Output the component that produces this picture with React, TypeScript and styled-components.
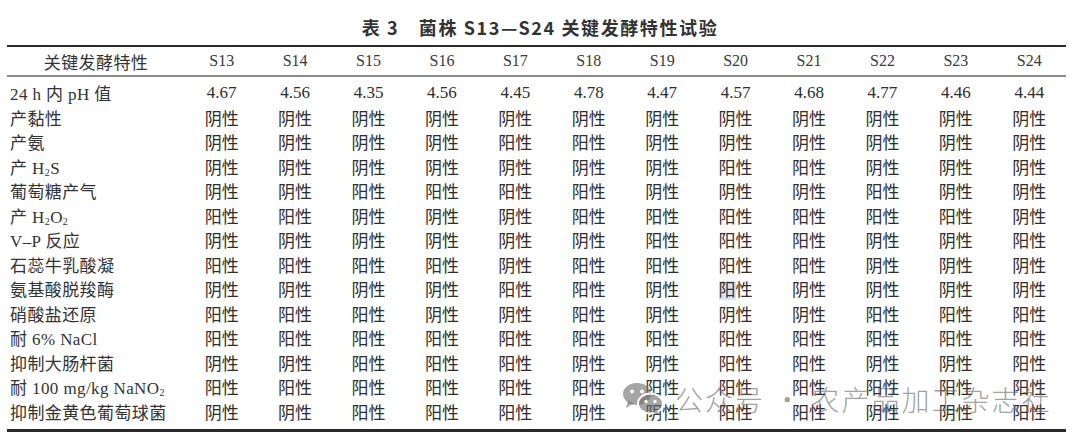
import React from "react";
import styled, { createGlobalStyle } from "styled-components";

const GlobalStyle = createGlobalStyle`
  html, body { margin: 0; padding: 0; background: #ffffff; }
  #root { width: 1080px; }
`;

const Page = styled.div`
  position: relative;
  width: 1080px;
  height: 442px;
  background: #fff;
  color: #2e2e2e;
  font-family: "Liberation Serif", "Noto Sans CJK SC", serif;
`;

const Title = styled.div`
  height: 45px;
  box-sizing: border-box;
  padding-top: 8px;
  display: flex;
  align-items: center;
  justify-content: center;
  font-family: "Noto Sans CJK SC", "Liberation Sans", sans-serif;
  font-weight: 700;
  font-size: 18px;
  letter-spacing: 1.6px;
  color: #333;
  white-space: pre;
`;

const Table = styled.div`
  width: 1059px;
  margin-left: 7px;
  border-top: 2px solid #2a2a2a;
  border-bottom: 3px solid #2a2a2a;
`;

const Row = styled.div<{ $head?: boolean }>`
  display: grid;
  grid-template-columns: 178px repeat(12, 1fr);
  align-items: center;
  height: ${(p) => (p.$head ? "28px" : "24.5px")};
  ${(p) => (p.$head ? "border-bottom: 2px solid #8c8c8c;" : "")}
`;

const Body = styled.div`
  padding-top: 3px;
  padding-bottom: 6px;
`;

const Label = styled.div<{ $center?: boolean }>`
  font-size: 17px;
  letter-spacing: 0.4px;
  padding-left: ${(p) => (p.$center ? "0" : "3px")};
  text-align: ${(p) => (p.$center ? "center" : "left")};
  white-space: nowrap;
  color: #333;
`;

const Cell = styled.div<{ $head?: boolean }>`
  text-align: center;
  font-size: ${(p) => (p.$head ? "16px" : "17px")};
  white-space: nowrap;
  color: ${(p) => (p.$head ? "#3a3a3a" : "#2e2e2e")};
`;

const Mark = styled.span`
  background: #d5e3f6;
`;

const Sub = styled.sub`
  font-size: 10px;
  vertical-align: -2px;
  line-height: 0;
`;

const Watermark = styled.div`
  position: absolute;
  left: 622px;
  top: 381px;
  display: flex;
  align-items: center;
  gap: 9px;
  pointer-events: none;
`;

const WatermarkText = styled.span`
  font-family: "Noto Sans CJK SC", sans-serif;
  font-weight: 300;
  font-size: 28px;
  letter-spacing: 2px;
  color: rgba(100, 100, 100, 0.62);
  white-space: pre;
  line-height: 36px;
`;

const strains = ["S13", "S14", "S15", "S16", "S17", "S18", "S19", "S20", "S21", "S22", "S23", "S24"];

type RowData = { label: React.ReactNode; values?: string[]; code?: string; mark?: number };

const rows: RowData[] = [
  { label: "24 h 内 pH 值", values: ["4.67", "4.56", "4.35", "4.56", "4.45", "4.78", "4.47", "4.57", "4.68", "4.77", "4.46", "4.44"] },
  { label: "产黏性", code: "NNNNNNNNNNNN" },
  { label: "产氨", code: "NNNNYYNNNNNN" },
  { label: <>产 H<Sub>2</Sub>S</>, code: "NNNNNNNYYNNN" },
  { label: "葡萄糖产气", code: "NNYYYYNNNYNN" },
  { label: <>产 H<Sub>2</Sub>O<Sub>2</Sub></>, code: "YYNNNYYYYYYN" },
  { label: "V–P 反应", code: "NNNNNNYYYNNY" },
  { label: "石蕊牛乳酸凝", code: "YYYYNYYYYNNN" },
  { label: "氨基酸脱羧酶", code: "NNNNYYNYNNNN", mark: 7 },
  { label: "硝酸盐还原", code: "YYYNNYNNNYYY" },
  { label: "耐 6% NaCl", code: "YYYYYYYYYYYY" },
  { label: "抑制大肠杆菌", code: "NNYYYNNYYNNY" },
  { label: <>耐 100 mg/kg NaNO<Sub>2</Sub></>, code: "YYYYYYYYYYYY" },
  { label: "抑制金黄色葡萄球菌", code: "NNYYYNNYYNNY" },
];

function WeChatLogo() {
  return (
    <svg width="44" height="34" viewBox="0 0 44 34" aria-hidden="true">
      <g fill="rgba(110,110,110,0.62)">
        <ellipse cx="15" cy="12" rx="14" ry="11" />
        <path d="M6 19 L4 26 L12 21 Z" />
      </g>
      <circle cx="10" cy="9.5" r="1.9" fill="#fff" />
      <circle cx="20" cy="9.5" r="1.9" fill="#fff" />
      <ellipse cx="28.5" cy="21.5" rx="12.5" ry="10" fill="rgba(110,110,110,0.62)" stroke="#fff" strokeWidth="2" />
      <path d="M35 29 L39 33.5 L31 30.5 Z" fill="rgba(110,110,110,0.62)" />
      <circle cx="24" cy="19.5" r="1.7" fill="#fff" />
      <circle cx="33" cy="19.5" r="1.7" fill="#fff" />
    </svg>
  );
}

export default function App() {
  return (
    <Page>
      <GlobalStyle />
      <Title>{"表 3　菌株 S13—S24 关键发酵特性试验"}</Title>
      <Table>
        <Row $head>
          <Label $center>关键发酵特性</Label>
          {strains.map((s) => (
            <Cell key={s} $head>
              {s}
            </Cell>
          ))}
        </Row>
        <Body>
          {rows.map((r, i) => {
            const vals = r.values ?? (r.code ?? "").split("").map((c) => (c === "Y" ? "阳性" : "阴性"));
            return (
              <Row key={i}>
                <Label>{r.label}</Label>
                {vals.map((v, j) => (
                  <Cell key={j}>
                    {r.mark === j ? (
                      <>
                        <Mark>{v[0]}</Mark>
                        {v.slice(1)}
                      </>
                    ) : (
                      v
                    )}
                  </Cell>
                ))}
              </Row>
            );
          })}
        </Body>
      </Table>
      <Watermark>
        <WeChatLogo />
        <WatermarkText>{"公众号 · 农产品加工杂志社"}</WatermarkText>
      </Watermark>
    </Page>
  );
}
